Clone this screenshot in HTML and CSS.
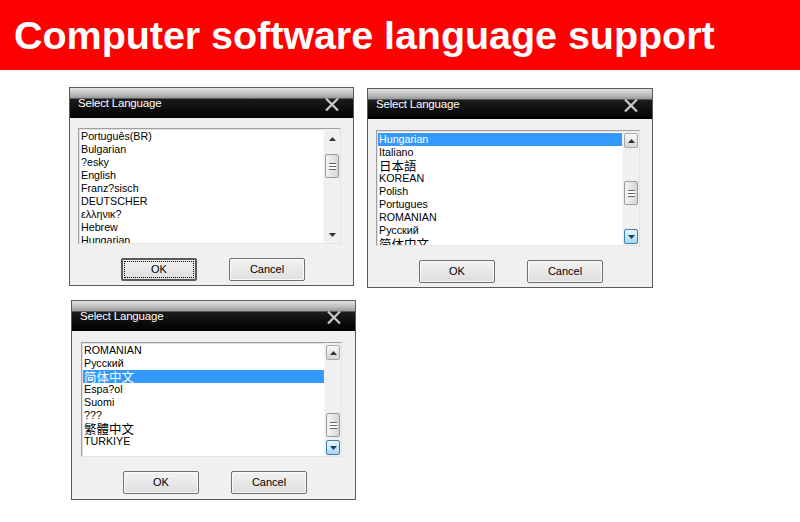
FILE: index.html
```html
<!DOCTYPE html>
<html>
<head>
<meta charset="utf-8">
<link rel="stylesheet" href="styles.css">
</head>
<body>
<div class="page">
  <header class="banner">Computer software language support</header>
  <main class="stage">
    <div class="row">
      <section class="dlg d1">
        <div class="tb"><span class="tt">Select Language</span>
          <svg class="x" width="14" height="13" viewBox="0 0 14 13"><path d="M1 0.5 L13 12.5 M13 0.5 L1 12.5" stroke="#c9c9c9" stroke-width="2.2"/></svg>
        </div>
        <div class="body">
          <div class="list">
            <ul class="items">
              <li>Português(BR)</li>
              <li>Bulgarian</li>
              <li>?esky</li>
              <li>English</li>
              <li>Franz?sisch</li>
              <li>DEUTSCHER</li>
              <li>ελληνικ?</li>
              <li>Hebrew</li>
              <li>Hungarian</li>
            </ul>
            <div class="sb flat">
              <div class="btn up"><svg width="7" height="4" viewBox="0 0 7 4"><path d="M0 4 L3.5 0 L7 4Z" fill="#333"/></svg></div>
              <div class="track">
                <div class="thumb t1"><span class="grip"></span></div>
              </div>
              <div class="btn dn"><svg width="7" height="4" viewBox="0 0 7 4"><path d="M0 0 L3.5 4 L7 0Z" fill="#333"/></svg></div>
            </div>
          </div>
          <div class="btns">
            <div class="pb def"><span class="focus">OK</span></div>
            <div class="pb">Cancel</div>
          </div>
        </div>
      </section>
      <section class="dlg d2">
        <div class="tb"><span class="tt">Select Language</span>
          <svg class="x" width="14" height="13" viewBox="0 0 14 13"><path d="M1 0.5 L13 12.5 M13 0.5 L1 12.5" stroke="#c9c9c9" stroke-width="2.2"/></svg>
        </div>
        <div class="body">
          <div class="list">
            <ul class="items">
              <li class="sel">Hungarian</li>
              <li>Italiano</li>
              <li class="cjk">日本語</li>
              <li>KOREAN</li>
              <li>Polish</li>
              <li>Portugues</li>
              <li>ROMANIAN</li>
              <li>Русский</li>
              <li class="cjk">简体中文</li>
            </ul>
            <div class="sb">
              <div class="btn up"><svg width="7" height="4" viewBox="0 0 7 4"><path d="M0 4 L3.5 0 L7 4Z" fill="#333"/></svg></div>
              <div class="track">
                <div class="thumb t2"><span class="grip"></span></div>
              </div>
              <div class="btn dn hot"><svg width="7" height="4" viewBox="0 0 7 4"><path d="M0 0 L3.5 4 L7 0Z" fill="#1d3f60"/></svg></div>
            </div>
          </div>
          <div class="btns">
            <div class="pb">OK</div>
            <div class="pb">Cancel</div>
          </div>
        </div>
      </section>
    </div>
    <div class="row row2">
      <section class="dlg d3">
        <div class="tb"><span class="tt">Select Language</span>
          <svg class="x" width="14" height="13" viewBox="0 0 14 13"><path d="M1 0.5 L13 12.5 M13 0.5 L1 12.5" stroke="#c9c9c9" stroke-width="2.2"/></svg>
        </div>
        <div class="body">
          <div class="list">
            <ul class="items">
              <li>ROMANIAN</li>
              <li>Русский</li>
              <li class="sel cjk">简体中文</li>
              <li>Espa?ol</li>
              <li>Suomi</li>
              <li>???</li>
              <li class="cjk">繁體中文</li>
              <li>TURKIYE</li>
            </ul>
            <div class="sb">
              <div class="btn up"><svg width="7" height="4" viewBox="0 0 7 4"><path d="M0 4 L3.5 0 L7 4Z" fill="#333"/></svg></div>
              <div class="track">
                <div class="thumb t3"><span class="grip"></span></div>
              </div>
              <div class="btn dn hot"><svg width="7" height="4" viewBox="0 0 7 4"><path d="M0 0 L3.5 4 L7 0Z" fill="#1d3f60"/></svg></div>
            </div>
          </div>
          <div class="btns">
            <div class="pb">OK</div>
            <div class="pb">Cancel</div>
          </div>
        </div>
      </section>
    </div>
  </main>
</div>
</body>
</html>
```
FILE: styles.css
```css
* { box-sizing: border-box; }
html, body { margin: 0; padding: 0; background: #fff; }
.page { width: 800px; height: 522px; overflow: hidden; background: #fff; }
.banner {
  height: 70px;
  background: #ff0000;
  color: #fff;
  font-family: "Liberation Sans", Arial, sans-serif;
  font-weight: bold;
  font-size: 39.5px;
  line-height: 70px;
  padding-left: 14px;
  letter-spacing: -0.05px;
  white-space: nowrap;
}
.stage { padding: 17px 0 0 69px; }
.row { display: flex; gap: 13px; align-items: flex-start; }
.row2 { margin-top: 12px; padding-left: 2px; }

.dlg {
  width: 285px;
  height: 199px;
  border: 1px solid #5a5a5a;
  background: #f0f0f0;
  display: flex;
  flex-direction: column;
  font-family: "Liberation Sans", Arial, sans-serif;
}
.d2 { width: 286px; height: 200px; margin-top: 1px; }
.d3 { width: 285px; height: 200px; }

.tb {
  height: 30px;
  flex: none;
  display: flex;
  align-items: flex-end;
  justify-content: space-between;
  padding: 0 14px 7px 8px;
  background: linear-gradient(#e2e2e2 0px, #bdbdbd 6px, #9a9a9a 10px, #1c1c1c 11px, #000 30px);
  color: #fff;
}
.tt { font-size: 11.5px; line-height: 14px; letter-spacing: -0.2px; padding-bottom: 1px; }

.body { flex: 1; padding: 10px 12px 0 8px; display: flex; flex-direction: column; }
.d2 .body { padding-top: 11px; }
.d3 .body { padding: 11px 13px 0 9px; }

.list {
  height: 116px;
  border: 1px solid #a0a0a0;
  border-right-color: #e3e3e3;
  border-bottom-color: #e3e3e3;
  box-shadow: inset 1px 1px 0 #e0e0e0;
  background: #fff;
  display: flex;
  overflow: hidden;
}
.d3 .list { height: 115px; }
.items {
  flex: 1;
  list-style: none;
  margin: 0;
  padding: 1px 0 0 1px;
  font-size: 10.7px;
  line-height: 13px;
  color: #000;
  overflow: hidden;
}
.d2 .items { padding-top: 2px; }
.d3 .items { padding-top: 1px; }
.items li { height: 13px; padding-left: 1px; white-space: nowrap; overflow: visible; }
.items li.cjk { font-family: "Noto Sans CJK SC", "Noto Sans CJK TC", sans-serif; font-size: 12.5px; line-height: 13px; }
.items li.sel { background: #3399ff; color: #fff; }

.sb {
  width: 17px;
  flex: none;
  display: flex;
  flex-direction: column;
  background: #f0f0f0;
  border-left: 1px solid #f6f6f6;
  padding: 2px 1px 1px 1px;
}
.sb .btn {
  height: 15px;
  flex: none;
  display: flex;
  align-items: center;
  justify-content: center;
  border: 1px solid #a8a8a8;
  border-radius: 2px;
  background: linear-gradient(#fafafa, #e6e6e6 50%, #d6d6d6);
}
.sb .btn.hot {
  border-color: #3c7fb1;
  background: linear-gradient(#e8f5fd, #c7e7fa 50%, #a6d6f4);
}
.sb.flat .btn { border-color: transparent; background: transparent; }
.track { flex: 1; position: relative; }
.thumb {
  position: absolute;
  left: 0; right: 0;
  border: 1px solid #9a9a9a;
  border-radius: 2px;
  background: linear-gradient(90deg, #f4f4f4, #e2e2e2 60%, #d4d4d4);
  display: flex;
  align-items: center;
  justify-content: center;
}
.t1 { top: 8px; height: 24px; }
.t2 { top: 33px; height: 24px; }
.t3 { top: 53px; height: 24px; }
.grip {
  width: 7px; height: 7px;
  border-top: 1px solid #666;
  border-bottom: 1px solid #666;
  background: linear-gradient(#fff 0 2px, #666 2px 3px, #fff 3px);
  background-clip: content-box;
}

.btns { display: flex; gap: 32px; padding-left: 43px; margin-top: 14px; }
.d3 .btns { padding-left: 42px; }
.pb {
  width: 76px;
  height: 23px;
  border: 1px solid #707070;
  border-radius: 2px;
  background: linear-gradient(#f3f3f3, #e6e6e6 60%, #dedede);
  box-shadow: inset 0 0 0 1px #fafafa;
  font-size: 11px;
  line-height: 21px;
  text-align: center;
  color: #000;
}
.pb.def { border: 2px solid #5a5a5a; box-shadow: none; padding: 1px; line-height: 17px; }
.focus { display: block; border: 1px dotted #000; height: 17px; line-height: 15px; }
```
